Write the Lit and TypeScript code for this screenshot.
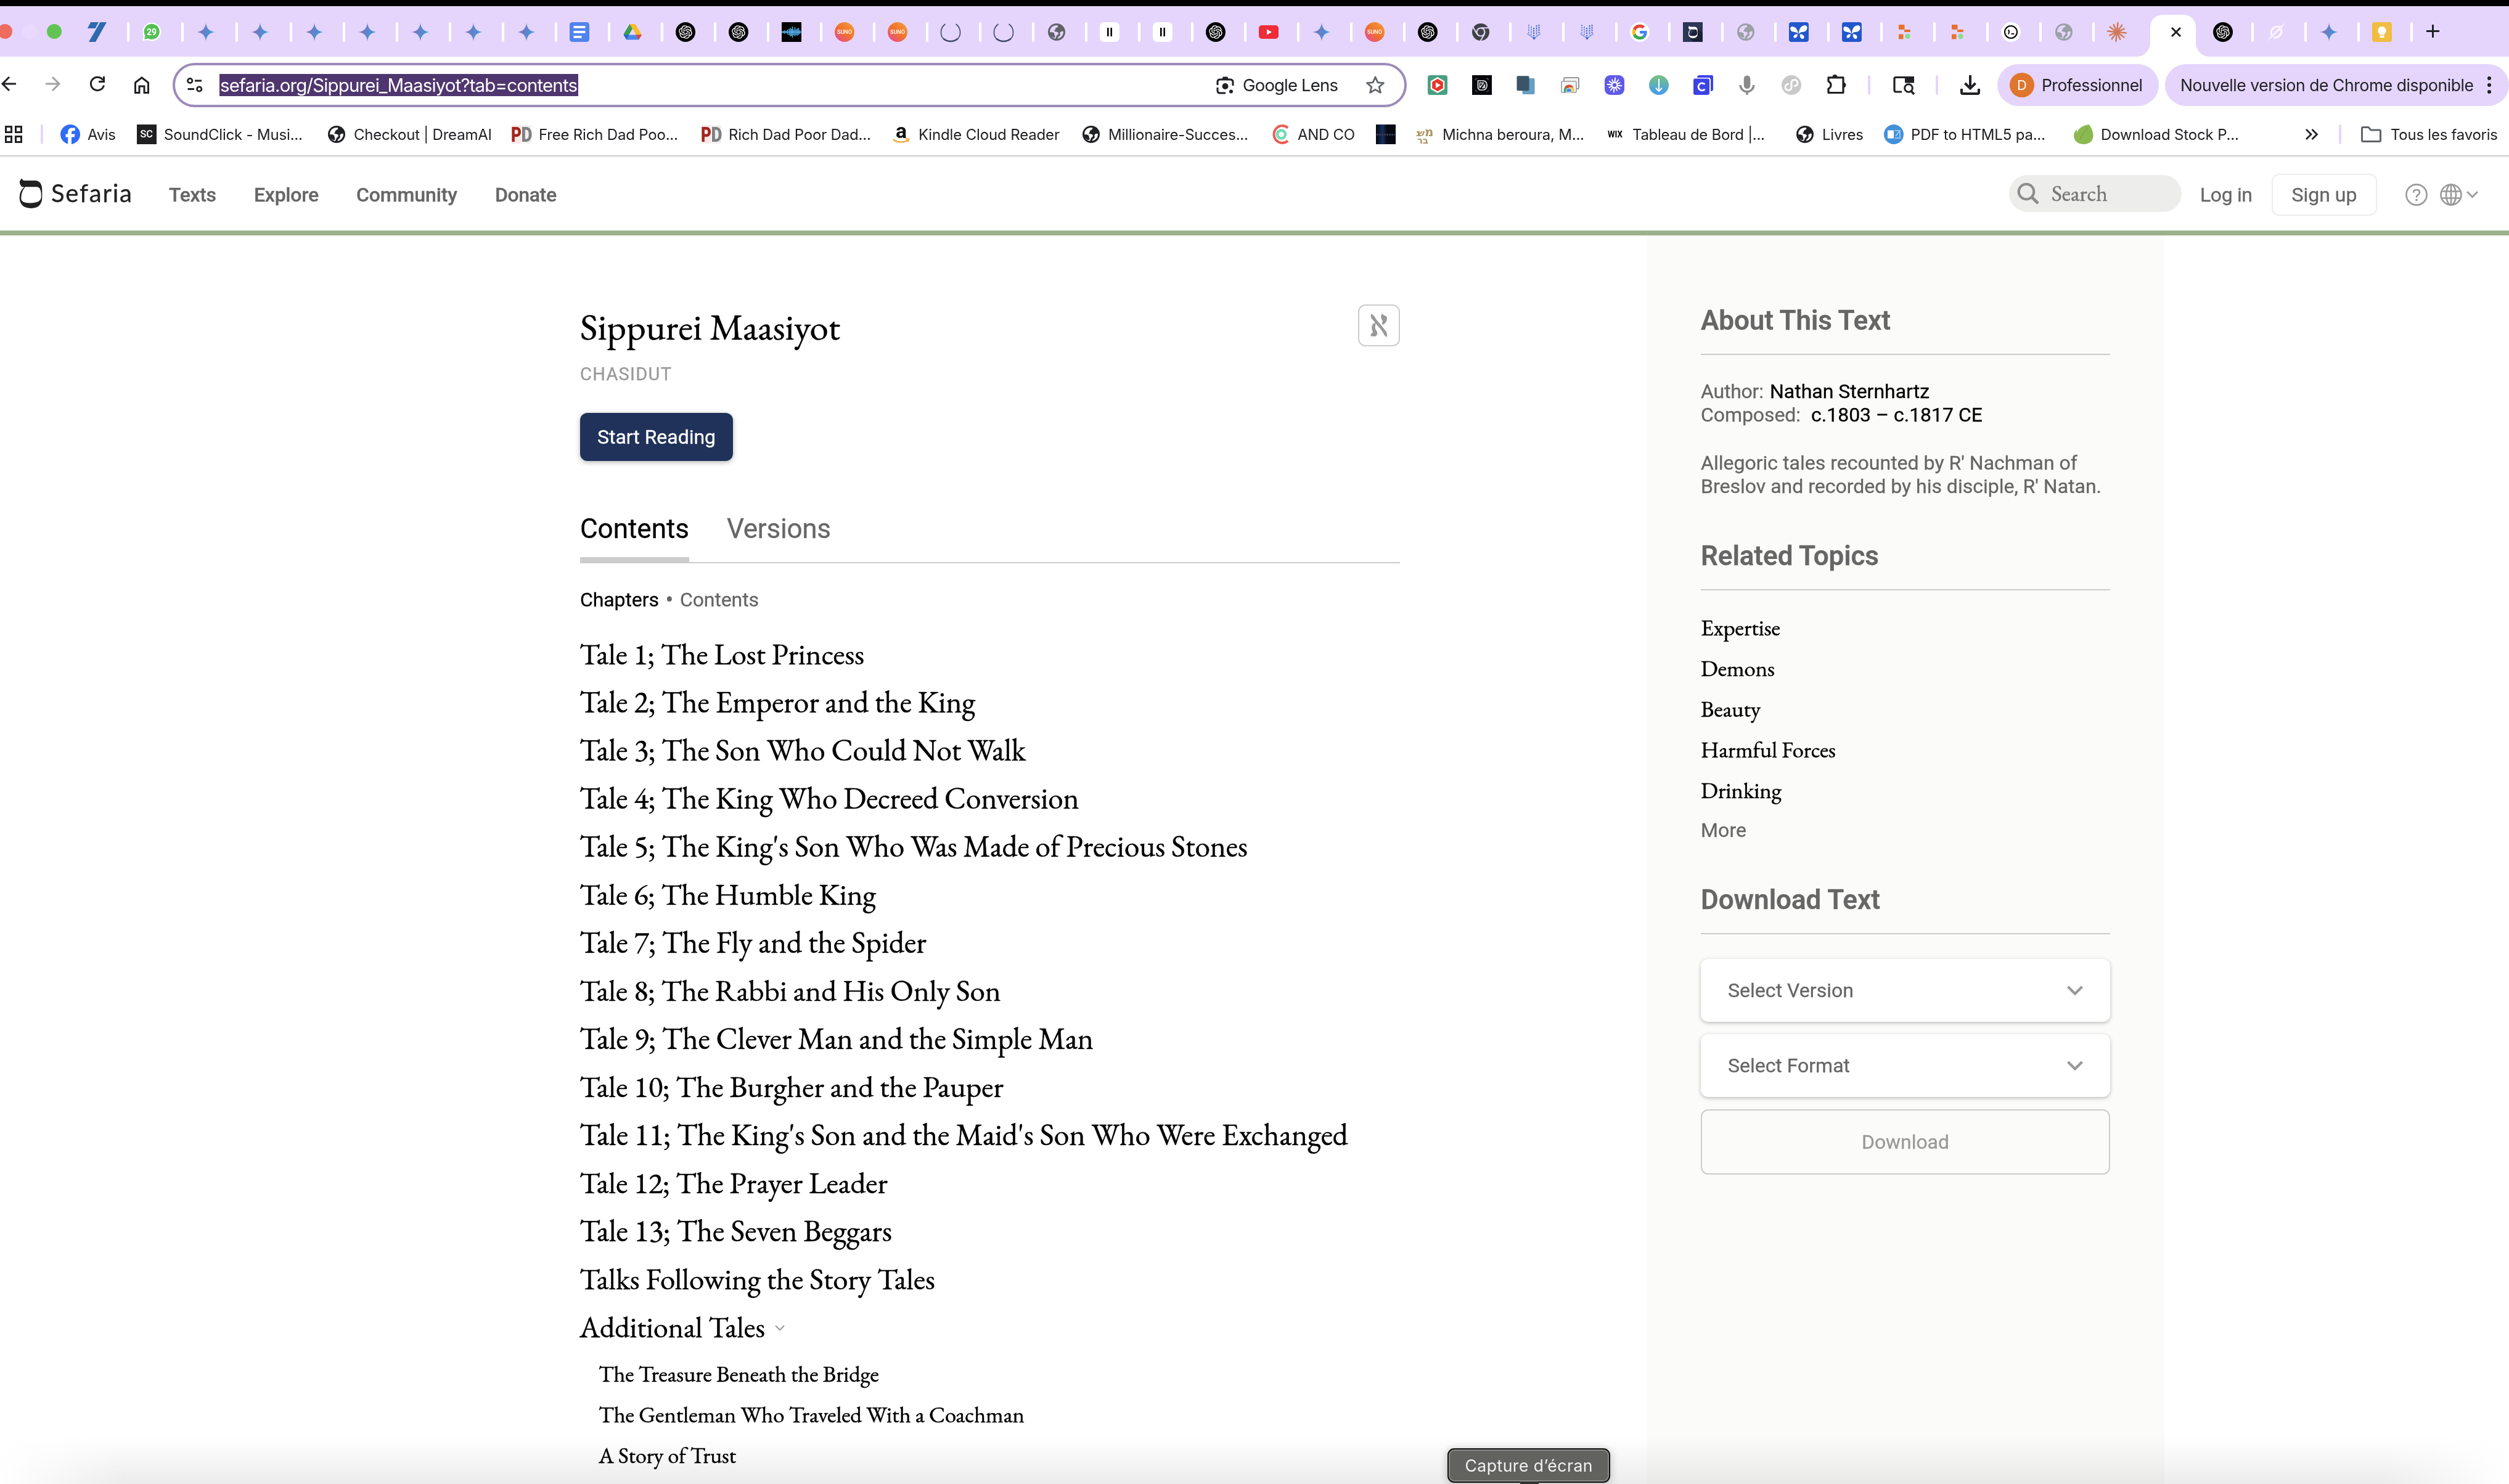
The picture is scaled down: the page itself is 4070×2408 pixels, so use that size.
import { LitElement, html, css, svg, nothing } from "lit";
import { customElement, property, state } from "lit/decorators.js";
import { styleMap } from "lit/directives/style-map.js";

/* One line of text that fills the given width, by tracking or by scaling its size. */
@customElement("fit-text")
class FitText extends LitElement {
  static styles = css`
    :host { display: inline-block; white-space: pre; flex: none; }
    .line { display: inline-block; }
  `;
  @property() text = "";
  @property({ type: Number }) w = 0;
  @property({ type: Boolean }) scaled = false;
  @state() private tracking = 0;
  @state() private size = 1;

  firstUpdated() {
    const line = this.renderRoot.querySelector(".line") as HTMLElement;
    const natural = line.getBoundingClientRect().width;
    const n = this.text.length - 1;
    if (natural <= 0 || n <= 0) return;
    if (this.scaled) this.size = this.w / natural;
    else this.tracking = (this.w - natural) / n;
  }

  render() {
    const look = this.scaled
      ? { fontSize: this.size + "em" }
      : { letterSpacing: this.tracking + "px", marginRight: -this.tracking + "px" };
    return html`<span class="line" style=${styleMap(look)}>${this.text}</span>`;
  }
}

const t = (text: string, w: number, cls = "") => html`<fit-text class=${cls} .text=${text} .w=${w}></fit-text>`;
const serif = (text: string, w: number) => html`<fit-text class="serif" .text=${text} .w=${w} .scaled=${true}></fit-text>`;
const pic = (body: unknown, size = 32, box = "0 0 32 32") =>
  html`<svg class="pic" width=${size} height=${size} viewBox=${box}>${body}</svg>`;

const star = svg`
  <defs><linearGradient id="gem" x1="0" y1="0.4" x2="1" y2="0.6"><stop offset="0" stop-color="#9168b0"/><stop offset=".5" stop-color="#5d86cc"/><stop offset="1" stop-color="#2fa2e6"/></linearGradient></defs>
  <path fill="url(#gem)" d="M16 1C16.8 9.5 21.500 15.200 31 16C21.500 16.800 16.800 22.500 16 31C15.200 22.500 10.500 16.800 1 16C10.500 15.200 15.200 9.500 16 1Z"/>`;

const knot = svg`<circle cx="16" cy="16" r="16" fill="#000"/><g transform="translate(5.200 5.200) scale(.9)"><path fill="#fff" d="M22.2819 9.8211a5.9847 5.9847 0 0 0-.5157-4.9108 6.0462 6.0462 0 0 0-6.5098-2.9A6.0651 6.0651 0 0 0 4.9807 4.1818a5.9847 5.9847 0 0 0-3.9977 2.9 6.0462 6.0462 0 0 0 .7427 7.0966 5.98 5.98 0 0 0 .511 4.9107 6.051 6.051 0 0 0 6.5146 2.9001A5.9847 5.9847 0 0 0 13.2599 24a6.0557 6.0557 0 0 0 5.7718-4.2058 5.9894 5.9894 0 0 0 3.9977-2.9001 6.0557 6.0557 0 0 0-.7475-7.0729zm-9.022 12.6081a4.4755 4.4755 0 0 1-2.8764-1.0408l.1419-.0804 4.7783-2.7582a.7948.7948 0 0 0 .3927-.6813v-6.7369l2.02 1.1686a.071.071 0 0 1 .038.052v5.5826a4.504 4.504 0 0 1-4.4945 4.4944zm-9.6607-4.1254a4.4708 4.4708 0 0 1-.5346-3.0137l.142.0852 4.783 2.7582a.7712.7712 0 0 0 .7806 0l5.8428-3.3685v2.3324a.0804.0804 0 0 1-.0332.0615L9.74 19.9502a4.4992 4.4992 0 0 1-6.1408-1.6464zM2.3408 7.8956a4.485 4.485 0 0 1 2.3655-1.9728V11.6a.7664.7664 0 0 0 .3879.6765l5.8144 3.3543-2.0201 1.1685a.0757.0757 0 0 1-.071 0l-4.8303-2.7865A4.504 4.504 0 0 1 2.3408 7.872zm16.5963 3.8558L13.1038 8.364 15.1192 7.2a.0757.0757 0 0 1 .071 0l4.8303 2.7913a4.4944 4.4944 0 0 1-.6765 8.1042v-5.6772a.79.79 0 0 0-.407-.667zm2.0107-3.0231l-.142-.0852-4.7735-2.7818a.7759.7759 0 0 0-.7854 0L9.409 9.2297V6.8974a.0662.0662 0 0 1 .0284-.0615l4.8303-2.7866a4.4992 4.4992 0 0 1 6.6802 4.66zM8.3065 12.863l-2.02-1.1638a.0804.0804 0 0 1-.038-.0567V6.0742a4.4992 4.4992 0 0 1 7.3757-3.4537l-.142.0805L8.704 5.459a.7948.7948 0 0 0-.3927.6813zm1.0976-2.3654l2.602-1.4998 2.6069 1.4998v2.9994l-2.5974 1.4997-2.6067-1.4997Z"/></g>`;

const globe = (fg: string, bg: string) => svg`
  <circle cx="16" cy="16" r="14" fill=${fg}/>
  <path fill=${bg} d="M5.200 15.500C5 9 10 4.800 17 5C19 5.300 18.500 7 17 8.500C15 9 14 9.500 14 11C14 12.500 12.500 13.500 12 14.500C13.500 15.500 17 15 18.500 17C20 19.500 17 20.500 16 22C15 24 15 26.500 13 26.700C8 25.500 5.200 21 5.200 17Z"/>
  <path fill=${fg} d="M5 16.500C9 15.500 13 17 12.500 19.500C12 21 14 22 13.500 24C13 26 10 25 8 23.500C5.500 21.500 4.500 19 5 16.500Z"/>
  <path fill=${bg} d="M26.800 15C25 14.500 22.500 15 21.500 17C21 19 22.500 19.500 21.500 21.500C20 23.500 18 24 17.500 26.700C23 26 27.500 21 26.800 15Z"/>`;

const suno = svg`
  <defs><linearGradient id="sun" x1="1" y1="0" x2="0.100" y2="1"><stop offset="0" stop-color="#f6a13a"/><stop offset=".55" stop-color="#f0702c"/><stop offset="1" stop-color="#e9479b"/></linearGradient></defs>
  <circle cx="16" cy="16" r="16" fill="url(#sun)"/>
  <text x="4" y="19" textLength="24" lengthAdjust="spacingAndGlyphs" class="tiny mid" font-size="8.500" fill="#fff">SUNO</text>`;

const wave = svg`<rect width="32" height="32" fill="#000"/><path stroke="#56b4ee" stroke-width="1.500" d="M0 16H32M2 14v4M4.500 13v6M7 14v4M9.500 12v8M12 11v10M14 9v14M16 11v11M17.500 7v18M19.500 12v9M21.500 8v15M23.500 12v9M25.500 10v12M27.500 9.500v11M29.500 13v6"/>`;
const ring = svg`<g fill="none" stroke="#3c4a66"><path stroke-width="1.600" d="M7.500 3C-1.500 9.500-1 21 4 26.500"/><path stroke-width="1.600" d="M24.500 3C33.500 9.500 33 21 28 26.500"/><path stroke-width="2.400" d="M4 26.500C11 32.500 21 32.500 28 26.500"/></g>`;
const bars = svg`<rect width="32" height="32" rx="7" fill="#fff"/><path fill="#000" d="M12 9h2.600v14H12zM17.400 9H20v14h-2.600z"/>`;
const youtube = svg`<rect y="5" width="32" height="22" rx="5" fill="#ee2d3a"/><path fill="#fff" d="M13 11.500v9l8-4.500z"/>`;
const chrome = svg`<circle cx="16" cy="16" r="14" fill="#3f4246"/><circle cx="16" cy="16" r="7.600" fill="#e5d5fc"/><circle cx="16" cy="16" r="5.400" fill="#3f4246"/><path fill="none" stroke="#e5d5fc" stroke-width="2" d="M16 9.200H29M10.100 19.400L3.500 8M21.900 19.400L15.500 30.500"/>`;
const chevronDots = svg`<g fill="none" stroke="#6d8fe0" stroke-width="2" stroke-dasharray="2.400 1.400"><path d="M8 4V18"/><path d="M12 7V21"/><path d="M16 9V25" stroke="#4169d0"/><path d="M20.500 5V21" stroke="#4169d0"/><path d="M24.500 4V18" stroke="#4169d0"/></g><path fill="none" stroke="#7d9be4" stroke-width="1.800" d="M5.500 18.500L16.500 26L27 18.500"/><circle cx="16.500" cy="26" r="2.100" fill="#4169d0"/>`;
const google = svg`<circle cx="16" cy="16" r="16" fill="#fff"/><g transform="translate(3.800 3.800) scale(.508)"><path fill="#EA4335" d="M24 9.500c3.540 0 6.710 1.220 9.210 3.600l6.850-6.850C35.900 2.380 30.470 0 24 0 14.620 0 6.510 5.380 2.560 13.220l7.980 6.190C12.430 13.720 17.740 9.500 24 9.500z"/><path fill="#4285F4" d="M46.980 24.550c0-1.570-.15-3.090-.38-4.550H24v9.020h12.940c-.58 2.960-2.260 5.480-4.780 7.180l7.730 6c4.510-4.180 7.090-10.360 7.090-17.650z"/><path fill="#FBBC05" d="M10.530 28.590c-.48-1.450-.76-2.990-.76-4.590s.27-3.140.76-4.590l-7.980-6.190C.92 16.460 0 20.120 0 24c0 3.880.92 7.540 2.560 10.780l7.970-6.190z"/><path fill="#34A853" d="M24 48c6.480 0 11.930-2.130 15.890-5.810l-7.730-6c-2.150 1.450-4.920 2.300-8.160 2.300-6.260 0-11.570-4.220-13.470-9.910l-7.980 6.190C6.510 42.620 14.620 48 24 48z"/></g>`;

const samekh = "M12 0L22 11H80Q114 12 114 60V95Q112 148 60 148Q4 148 2 95Q2 62 26 43L14 42Q2 32 3 14ZM30 42Q9 68 10 100Q12 122 55 122Q105 122 109 95Q112 44 88 42Z";
const sefaria = svg`<rect width="32" height="32" fill="#2d3655"/><path fill="#1a2036" d="M22 8L32 18V32H17L10 24z"/><g transform="translate(8.500 6) scale(.135)"><path fill="#fff" fill-rule="evenodd" d=${samekh}/></g>`;
const butterfly = svg`<rect width="32" height="32" rx="4" fill="#2257cc"/><g fill="#fff"><path d="M15.300 19.500C14.800 15.500 13 8 5.500 7C1.500 7 1.500 12 4 14.500C7 16.500 14 15.500 15.300 19.500Z"/><path d="M16.300 19.500C15.500 13 18.500 5.500 26 5C30.500 5.500 30.500 11 27.500 14C24 17 17.800 14.500 16.300 19.500Z"/><path d="M14 19.500C10 19 7.500 21 7.300 24C8.500 27.500 14 25.500 14 19.500Z"/><path d="M17.800 19.500C21 19 24.500 21 24.700 24.500C23.500 29.500 16.800 27 17.800 19.500Z"/></g>`;
const blocks = svg`<g fill="#e8702f"><rect x="6" y="4" width="9.500" height="8" rx="1"/><rect x="15" y="12" width="10" height="4" rx=".8"/><rect x="6" y="19.500" width="7.500" height="8" rx="1"/></g><circle cx="20.500" cy="23" r="4.200" fill="#8bdc8b"/>`;
const term = svg`<circle cx="16" cy="16" r="16" fill="#fff"/><circle cx="16" cy="16" r="10" fill="none" stroke="#000" stroke-width="2"/><path fill="none" stroke="#000" stroke-width="1.800" d="M11.500 12.500Q14.800 15.500 11.500 19.500M16.500 18.800H21.500"/>`;
const rays = (n: number, color: string, r0: number, r1: number, sw: number) =>
  Array.from({ length: n }, (_, i) => svg`<path stroke=${color} stroke-width=${sw} stroke-linecap="round" d="M16 ${16 - r0}V${16 - r1 + (i % 3)}" transform="rotate(${(360 / n) * i + 6} 16 16)"/>`);
const claude = svg`${rays(12, "#d07a58", 1, 15, 2.5)}`;
const ghost = svg`<g fill="none" stroke="#fbf8ff" stroke-width="3"><path d="M10 23A10 10 0 0 1 22 8"/><path d="M24 11A10 10 0 0 1 12 24.500"/></g><path fill="#fbf8ff" d="M1 31L10 20L25 5L31.500 1L22 13L10 24Z" opacity=".85"/>`;
const keep = svg`<rect width="32" height="32" rx="4" fill="#f1bd42"/><path fill="#fff" d="M16 7a6.800 6.800 0 0 1 3.800 12.300V20.500h-7.600V19.300A6.800 6.800 0 0 1 16 7zM12.500 21.800h7v3.400h-7z"/>`;
const docs = svg`<rect width="32" height="32" rx="4.500" fill="#4f83ee"/><path fill="#fff" d="M6.500 6h19v3.800h-19zM6.500 14h19v3.800h-19zM6.500 22h13v3.800h-13z"/>`;
const drive = svg`<path fill="#3a9c51" d="M11.500 3h9L11 19.500L6.300 27.500L1.500 19.500z"/><path fill="#f7bb2b" d="M11.500 3h9L31 20.500h-9.500z"/><path fill="#4a86ef" d="M6.300 28.500L11 20.500H31L26 28.500z"/><path fill="#2464d4" d="M1.500 20.500H11L6.300 28.500z"/><path fill="#dd4437" d="M21.500 20.500H31L26 28.500z"/><path fill="#e5d5fc" d="M16 10.800l5.400 9.400H10.600z"/>`;
const whatsapp = svg`<path fill="#fff" d="M1 30.500L3 22.500A15 15 0 1 1 9.500 29z"/><path fill="#54bf55" d="M4.200 27.800L5.500 22A12.600 12.600 0 1 1 10.200 26.400z"/><text x="8" y="20.800" textLength="16" lengthAdjust="spacingAndGlyphs" class="tiny" font-size="14" fill="#fff">29</text>`;
const seven = svg`<path fill="#2f69b0" d="M5 0H18L12.500 10H0ZM20.500 0H31L13 32H2Z"/>`;

const tabs: Array<[unknown, number]> = [
  [whatsapp, 88], [star, 88], [star, 88], [star, 86], [star, 86], [star, 86], [star, 86], [star, 86],
  [docs, 86], [drive, 86], [knot, 86], [knot, 86], [wave, 86], [suno, 86], [suno, 86], [ring, 86], [ring, 86],
  [globe("#5f6368", "#e5d5fc"), 86], [bars, 86], [bars, 86], [knot, 86], [youtube, 86], [star, 86], [suno, 86], [knot, 86],
  [chrome, 86], [chevronDots, 86], [chevronDots, 86], [google, 86], [sefaria, 86], [globe("#9aa0a6", "#e5d5fc"), 86],
  [butterfly, 86], [butterfly, 86], [blocks, 86], [blocks, 86], [term, 86], [globe("#9aa0a6", "#e5d5fc"), 86], [claude, 86],
];
const tailTabs: Array<[unknown, number]> = [[ghost, 86], [star, 86], [keep, 86]];

const dark = "#202124";
const extensions = [
  svg`<rect width="32" height="32" rx="4" fill="#4a9f80"/><path fill="#e93529" stroke="#fff" stroke-width="2.400" d="M16 4.500L26 10.200V21.800L16 27.500L6 21.800V10.200Z"/><path fill="#fff" d="M13 11.500v9.500l8-4.700z"/>`,
  svg`<rect width="32" height="32" fill="#06070b"/><g fill="none" stroke="#e8e8e8" stroke-width="1.700"><path d="M9.500 9H19Q24 10.500 24 16Q24 23 19 24H12L9.500 21Z"/><path d="M12.500 21V12.500H18.500L12.500 20.500M17 20.500H20.500V15.500Z" stroke-width="1.400"/></g><g fill="none" stroke="#666" stroke-width="1.200"><path d="M5 8Q6 5.500 9 5M23 5Q26 6 27 8M5 24Q6 26.500 9 27M23 27Q26 26.500 27 24"/></g>`,
  svg`<rect x="10.500" y="5" width="20" height="26" rx="2" fill="#679fc4"/><rect x="1.500" y="1.200" width="20" height="24" rx="2" fill="#3a5567"/>`,
  svg`<g fill="#f4f4f4" stroke="#777" stroke-width="1.500"><rect x="6" y="4" width="24" height="18" rx="1.500"/><rect x="2" y="10" width="24" height="18" rx="1.500" stroke="#999"/></g><path fill="#cf4a3c" d="M7 20A8 8 0 0 1 21.500 20L14 23z"/><path fill="#3ba255" d="M6 27.500V22L8.500 18.500L13 27.500z"/><path fill="#f7c83e" d="M22.500 27.500V22L19 19.500H14L16 27.500z"/><path fill="#4d86ee" stroke="#fff" d="M10 27.500a4.500 4.500 0 1 1 8 0z"/>`,
  svg`<rect width="32" height="32" rx="9" fill="#5f5ae8"/>${rays(12, "#fff", 5, 11.500, 1.900)}<circle cx="16" cy="16" r="4.300" fill="none" stroke="#fff" stroke-width="2"/>`,
  svg`<defs><linearGradient id="dn" x1="0" y1="0" x2="0" y2="1"><stop offset="0" stop-color="#7cc17f"/><stop offset="1" stop-color="#3f9bf6"/></linearGradient></defs><circle cx="16" cy="16" r="16" fill="url(#dn)"/><path fill="none" stroke="#fff" stroke-width="2" stroke-linecap="round" d="M16 6.500V26M11.500 21.200L16 26L20.500 21.200"/>`,
  svg`<path fill="#3c43e6" d="M10 0H30Q32 0 32 2V23Q32 26 28 26V8Q28 4 24 4H6Q6 0 10 0Z"/><rect y="5.500" width="26" height="26.500" rx="3" fill="#3c43e6"/><path fill="none" stroke="#fff" stroke-width="2.800" d="M18.500 14.800A6 6 0 1 0 18.500 22.800"/>`,
  svg`<rect x="10.800" y="0.500" width="10.500" height="21.500" rx="5.200" fill="#8a8a8a"/><path fill="none" stroke="#8a8a8a" stroke-width="3.400" d="M5.200 16A10.800 10.800 0 0 0 26.800 16M16 27V32"/>`,
  svg`<circle cx="16" cy="16" r="16" fill="#c9c9c9"/><path fill="none" stroke="#fff" stroke-width="3" stroke-linecap="round" d="M10.500 14.500A5 5 0 1 0 16 19.500V12.500A5 5 0 1 1 21.500 17.500"/>`,
  svg`<path fill="none" stroke=${dark} stroke-width="3.200" stroke-linejoin="round" d="M4 3.800H28V28.500H4V22Q8 20 8 16T4 10Z"/><path fill=${dark} d="M10.500 3a4 4 0 0 1 8 0zM28 11.500a4.500 4.500 0 0 1 0 9z"/>`,
];

const bm = {
  fb: svg`<circle cx="16" cy="16" r="16" fill="#2f6bf6"/><path fill="#fff" d="M12.200 32V20.500H8.500V15.500H12.200V13C12.200 8 14.500 5.500 19 5.500H23.800V10.200H21C18.800 10.200 18 11 18 12.800V15.500H23.500L22.700 20.500H18V32z"/>`,
  sc: svg`<rect width="32" height="32" fill="#202022"/><text x="5.500" y="20.800" textLength="20.500" lengthAdjust="spacingAndGlyphs" class="tiny mid" font-size="16" fill="#fff">SC</text>`,
  globe: globe(dark, "#fff"),
  pd: svg`<rect y="1" width="15" height="30" fill="#f9e8e6"/><rect x="16" y="1" width="16" height="30" fill="#f0f0f0"/><text x="-1" y="27.500" textLength="17" lengthAdjust="spacingAndGlyphs" class="tiny heavy" font-size="33" fill="#a3241c">P</text><text x="15.500" y="27.500" textLength="18" lengthAdjust="spacingAndGlyphs" class="tiny heavy" font-size="33" fill="#808080">D</text>`,
  amazon: svg`<text x="7" y="22" textLength="18" lengthAdjust="spacingAndGlyphs" class="tiny" font-size="34" fill="#111">a</text><path fill="none" stroke="#f0a030" stroke-width="2.200" d="M3 24.500Q14 32 26 26M23 23.500L28 23.500L27 28"/>`,
  andco: svg`<path fill="none" stroke="#ee5b52" stroke-width="4" d="M28 5.500A13.500 14 0 1 0 28 26.500"/><circle cx="17.500" cy="16" r="6.500" fill="none" stroke="#6fdcb4" stroke-width="4.500"/>`,
  night: svg`<defs><linearGradient id="nt" x1="0" x2="1" y1="0" y2="0"><stop offset="0" stop-color="#04060f"/><stop offset=".35" stop-color="#16305e"/><stop offset=".55" stop-color="#0a0a18"/><stop offset="1" stop-color="#04060f"/></linearGradient></defs><rect width="32" height="32" fill="url(#nt)"/><path stroke="#34384e" stroke-width="3" stroke-dasharray="3 1" d="M1 16.500H31"/>`,
  michna: svg`<g fill="#ab9660" class="he"><text x="15" y="19" font-size="20" textLength="15">מ</text><text x="1" y="19" font-size="15" textLength="14">שנ</text><text x="3" y="31" font-size="15" textLength="18">בר</text></g>`,
  wix: svg`<text x="4" y="21" textLength="24" lengthAdjust="spacingAndGlyphs" class="tiny" font-size="14" fill="#000">WIX</text>`,
  pdf: svg`<circle cx="16" cy="16" r="16" fill="#4290da"/><rect x="6" y="9.500" width="10" height="13" fill="#fff"/><path fill="none" stroke="#b4d6f5" stroke-width="1.500" d="M17.500 10H26V22H17.500M19 19L25 11"/>`,
  envato: svg`<path fill="#8ab950" d="M24.500 0C28 4 32 12 31.500 19C31 27 25 32 16 32C7 32 1 27 0 19C0 15 1.500 11.500 4 9C5.500 8 5 11 5.500 14C6 7 14 1.500 24.500 0Z"/><path stroke="#79a845" fill="none" stroke-width="1.500" d="M23 6Q14 14 10 24"/>`,
};
/* icon, label, label width, distance to the next bookmark */
const bookmarks: Array<[unknown, string, number, number]> = [
  [bm.fb, "Avis", 46, 124], [bm.sc, "SoundClick - Musi...", 225, 308], [bm.globe, "Checkout | DreamAI", 224, 300],
  [bm.pd, "Free Rich Dad Poo...", 226, 308], [bm.pd, "Rich Dad Poor Dad...", 231, 308], [bm.amazon, "Kindle Cloud Reader", 229, 308],
  [bm.globe, "Millionaire-Succes...", 227, 307], [bm.andco, "AND CO", 93, 171], [bm.night, "", 0, 64],
  [bm.michna, "Michna beroura, M...", 230, 308], [bm.wix, "Tableau de Bord |...", 215, 308], [bm.globe, "Livres", 67, 144],
  [bm.pdf, "PDF to HTML5 pa...", 218, 308], [bm.envato, "Download Stock P...", 224, 376],
];

const tales: Array<[string, number]> = [
  ["Tale 1; The Lost Princess", 462], ["Tale 2; The Emperor and the King", 642], ["Tale 3; The Son Who Could Not Walk", 724],
  ["Tale 4; The King Who Decreed Conversion", 811], ["Tale 5; The King's Son Who Was Made of Precious Stones", 1084],
  ["Tale 6; The Humble King", 481], ["Tale 7; The Fly and the Spider", 563], ["Tale 8; The Rabbi and His Only Son", 684],
  ["Tale 9; The Clever Man and the Simple Man", 834], ["Tale 10; The Burgher and the Pauper", 688],
  ["Tale 11; The King's Son and the Maid's Son Who Were Exchanged", 1247], ["Tale 12; The Prayer Leader", 500],
  ["Tale 13; The Seven Beggars", 507], ["Talks Following the Story Tales", 577], ["Additional Tales", 301],
];
const subTales: Array<[string, number]> = [
  ["The Treasure Beneath the Bridge", 455], ["The Gentleman Who Traveled With a Coachman", 691], ["A Story of Trust", 223],
];
const topics: Array<[string, number]> = [["Expertise", 129], ["Demons", 120], ["Beauty", 97], ["Harmful Forces", 219], ["Drinking", 131]];

@customElement("app-root")
class AppRoot extends LitElement {
  static styles = css`
    :host { display: block; position: relative; width: 4070px; height: 2408px; overflow: hidden; background: #fff; font-family: Roboto, "Liberation Sans", sans-serif; font-size: 32px; color: #666; }
    * { box-sizing: border-box; }
    svg { display: block; flex: none; overflow: visible; }
    .tiny { font-family: Roboto, "Liberation Sans", sans-serif; font-weight: 700; }
    .mid { font-weight: 500; }
    .heavy { font-weight: 900; }
    .he { font-family: "DejaVu Sans", sans-serif; font-weight: 700; }
    .screen-edge { height: 10px; background: #000; }

    .tabstrip { display: flex; align-items: flex-start; height: 82px; padding-top: 26px; background: #e5d5fc; }
    .lights { margin: -1px 42px 0 0; }
    .first { margin-right: 32px; }
    .tab { display: flex; gap: 20px; flex: none; }
    .tick { width: 4px; height: 32px; border-radius: 2px; background: #fff; flex: none; }
    .active { position: relative; display: flex; justify-content: center; width: 74px; height: 68px; margin: -12px 28px 0 8px; padding: 20px 0 0 10px; border-radius: 20px 20px 0 0; background: #fff; flex: none; }
    .active::before, .active::after { content: ""; position: absolute; bottom: 0; width: 22px; height: 22px; }
    .active::before { right: 100%; background: radial-gradient(circle at 0 0, transparent 21.500px, #fff 22px); }
    .active::after { left: 100%; background: radial-gradient(circle at 100% 0, transparent 21.500px, #fff 22px); }
    .lone { margin-right: 30px; }
    .plus { margin: 4px 0 0 22px; }

    .ui { font-family: Inter, "Liberation Sans", sans-serif; color: #202124; }
    .toolbar { display: flex; align-items: center; height: 92px; }
    .navs { display: flex; margin-left: -22px; }
    .nav { display: flex; justify-content: center; width: 72px; }
    .omnibox { display: flex; align-items: center; width: 2002px; height: 72px; margin: 0 14px; padding: 0 31px 0 19px; border: 4px solid #9d8bb9; border-radius: 36px; font-size: 27.500px; line-height: 36px; flex: none; }
    .url { margin-left: 27px; padding: 0 1px; height: 36px; background: #50366e; color: #fff; font-size: 29.500px; }
    .space { flex: 1; }
    .lens { margin-right: 14px; }
    .fav { margin-left: 44px; }
    .rule { width: 4px; height: 32px; border-radius: 2px; background: #e5d5fc; flex: none; }
    .r1 { margin: 0 37px 0 16px; }
    .side { margin-right: 35px; }
    .dl { margin: 0 28px 0 36px; }
    .pill { display: flex; align-items: center; height: 68px; border-radius: 34px; background: #e5d5fc; font-size: 26.500px; flex: none; }
    .profile { width: 262px; padding-left: 20px; margin-right: 10px; }
    .avatar { display: flex; align-items: center; justify-content: center; width: 40px; height: 40px; margin-right: 12px; border-radius: 50%; background: #e0752d; color: #fff; font-size: 22px; }
    .update { width: 558px; padding: 0 28px 0 25px; justify-content: space-between; }

    .bookmarks { display: flex; align-items: center; height: 70px; border-bottom: 2px solid #ccc; padding-left: 8px; font-size: 24px; }
    .r2 { margin: 0 28px 0 30px; }
    .bookmark { display: flex; align-items: center; gap: 12px; flex: none; }
    .r3 { margin: 0 32px 0 34px; }
    .folder { margin-right: 15px; }

    .site { display: flex; align-items: center; height: 128px; padding: 4px 50px 0 31px; border-bottom: 8px solid #9bb18b; -webkit-text-stroke: .3px; }
    .logo { margin: -5px 14px 0 0; }
    .word { font-family: Lato, "Open Sans", sans-serif; font-size: 40px; color: #212121; margin: -7px 60px 0 0; }
    .menu { display: flex; gap: 61px; font-weight: 500; }
    .search { display: flex; align-items: center; width: 280px; height: 60px; margin: -4px 30px 0 0; padding-left: 13px; border-radius: 30px; background: #ededec; font-size: 37px; flex: none; }
    .search .serif { margin: -3px 0 0 20px; color: #777; }
    .signup { display: flex; align-items: center; justify-content: center; width: 171px; height: 68px; margin: 0 46px 0 31px; border: 2px solid #ededec; border-radius: 12px; flex: none; }
    .help { margin-right: 20px; }
    .lang { margin-right: 7px; }
    .serif { font-family: "EB Garamond", "Liberation Serif", serif; color: #000; -webkit-text-stroke: .5px; }

    .page { display: flex; align-items: stretch; height: 2026px; padding-left: 941px; -webkit-text-stroke: .3px; }
    .book { width: 1330px; margin-right: 400px; padding-top: 107px; flex: none; }
    .top { display: flex; justify-content: space-between; height: 80px; font-size: 62px; line-height: 80px; }
    .aleph { display: flex; align-items: center; justify-content: center; width: 68px; height: 68px; margin-top: 5px; border: 2px solid #ccc; border-radius: 12px; }
    .category { margin-top: 18px; height: 40px; line-height: 40px; font-size: 29px; color: #999; }
    .start { display: flex; align-items: center; justify-content: center; width: 248px; height: 78px; margin-top: 43px; border-radius: 12px; background: #203259; color: #fff; box-shadow: 0 2px 8px rgba(0, 0, 0, .3); }
    .views { display: flex; gap: 61px; height: 86px; margin-top: 80px; border-bottom: 2px solid #ccc; font-size: 44px; line-height: 60px; }
    .view { height: 86px; }
    .current { color: #000; border-bottom: 10px solid #ccc; }
    .crumbs { display: flex; height: 40px; line-height: 40px; margin-top: 39px; }
    .black { color: #000; }
    .dot { width: 34px; text-align: center; font-size: 38px; }
    .tales { display: flex; flex-direction: column; margin: 29px 0 0 -1px; font-size: 50px; }
    .tale { display: flex; align-items: center; height: 78px; line-height: 78px; }
    .more-tales { margin: 4px 0 0 16px; }
    .subtales { display: flex; flex-direction: column; margin-top: 4px; padding-left: 30px; font-size: 37.500px; line-height: 66px; }
    .subtale { height: 66px; }

    .info { width: 840px; padding: 112px 88px 0; background: #fbfbfa; flex: none; }
    .heading { height: 82px; border-bottom: 2px solid #ccc; font-size: 44px; font-weight: 600; line-height: 52px; }
    .later { margin-top: 68px; }
    .para { display: flex; flex-direction: column; margin-top: 40px; line-height: 38px; }
    .fact { display: flex; height: 38px; }
    .author { margin-left: 10px; }
    .composed { margin-left: 17px; }
    .topics { display: flex; flex-direction: column; margin-top: 27px; font-size: 37px; line-height: 66px; }
    .topic { height: 66px; }
    .more { height: 38px; margin-top: 13px; line-height: 38px; }
    .form { display: flex; flex-direction: column; gap: 20px; margin-top: 40px; }
    .select { display: flex; align-items: center; justify-content: space-between; height: 102px; padding: 0 44px; border-radius: 12px; background: #fff; box-shadow: 0 2px 6px rgba(0, 0, 0, .25); }
    .download { display: flex; align-items: center; justify-content: center; height: 106px; border: 2px solid #ccc; border-radius: 12px; color: #999; }

    .shade { position: absolute; left: 0; right: 0; bottom: 0; height: 76px; background: linear-gradient(90deg, #fff, rgba(255, 255, 255, 0) 5%, rgba(255, 255, 255, 0) 95%, #fff), linear-gradient(rgba(0, 0, 0, 0), rgba(0, 0, 0, .075)); mix-blend-mode: multiply; }
    .tip { position: absolute; left: 2348px; top: 2350px; display: flex; align-items: center; justify-content: center; width: 264px; height: 56px; border: 2px solid #111; border-radius: 11px; background: #62625f; box-shadow: inset 0 0 0 2px #8b8b88, 0 2px 14px rgba(0, 0, 0, .25); color: #f2f2f2; font-family: Inter, sans-serif; font-size: 26.500px; }
    .tip::after { content: ""; position: absolute; top: 100%; left: 116px; width: 30px; height: 10px; background: #333; }
    .cross { margin-top: 0; }
  `;

  tab([icon, w]: [unknown, number]) {
    return html`<div class="tab" style=${styleMap({ width: w + "px" })}><span class="tick"></span>${pic(icon)}</div>`;
  }

  render() {
    const chevron = html`<svg width="26" height="16" viewBox="0 0 26 16"><path fill="none" stroke="#999" stroke-width="4.200" d="M1.500 2L13 13.500L24.500 2"/></svg>`;
    return html`
      <div class="screen-edge"></div>
      <div class="tabstrip">
        <svg class="lights" width="100" height="32" viewBox="0 0 100 32"><circle cx="8" cy="16" r="12" fill="#ee6b5f"/><circle cx="48" cy="16" r="12" fill="#ead9fe"/><circle cx="88" cy="16" r="12" fill="#61c454"/></svg>
        <div class="first">${pic(seven)}</div>
        ${tabs.map((x) => this.tab(x))}
        <div class="active"><svg class="cross" width="16" height="16" viewBox="0 0 16 16"><path stroke=${dark} stroke-width="3" d="M1 1L15 15M15 1L1 15"/></svg></div>
        <div class="lone">${pic(knot)}</div>
        ${tailTabs.map((x) => this.tab(x))}
        <span class="tick"></span>
        <svg class="plus" width="21" height="21" viewBox="0 0 21 21"><path stroke=${dark} stroke-width="3" d="M10.500 0V21M0 10.500H21"/></svg>
      </div>

      <div class="toolbar ui">
        <div class="navs">
          <div class="nav"><svg width="24" height="24" viewBox="0 0 24 24"><path fill="none" stroke=${dark} stroke-width="3" d="M24 12H2.500M13 1L2 12L13 23"/></svg></div>
          <div class="nav"><svg width="24" height="24" viewBox="0 0 24 24"><path fill="none" stroke="#a3a3a3" stroke-width="3" d="M0 12H21.500M11 1L22 12L11 23"/></svg></div>
          <div class="nav"><svg width="24" height="24" viewBox="0 0 24 24"><path fill="none" stroke=${dark} stroke-width="3" d="M21 6A10.700 10.700 0 1 0 22.500 14.500M22.500 0V8.500H14"/></svg></div>
          <div class="nav"><svg width="24" height="28" viewBox="0 0 24 28"><path fill="none" stroke=${dark} stroke-width="3" d="M1.500 10L12 2L22.500 10V26.500H16V16H8V26.500H1.500Z"/></svg></div>
        </div>
        <div class="omnibox">
          <svg width="26" height="24" viewBox="0 0 26 24"><g fill="none" stroke=${dark} stroke-width="2.800"><circle cx="5.200" cy="5" r="3.700"/><path d="M13 5H24M1.500 18.500H12"/><circle cx="20.200" cy="18.500" r="3.700"/></g></svg>
          <div class="url">${t("sefaria.org/Sippurei_Maasiyot?tab=contents", 580)}</div>
          <span class="space"></span>
          <svg class="lens" width="29" height="29" viewBox="0 0 29 29"><g fill="none" stroke=${dark} stroke-width="3"><path d="M2 14V9Q2 5 6 5H22Q27 5 27 9V15M2 18V23Q2 27 6 27H15"/></g><path fill=${dark} d="M9 5L11 0.500H18L20 5z"/><circle cx="14.500" cy="16" r="5" fill=${dark}/><circle cx="24" cy="24.500" r="3" fill=${dark}/></svg>
          ${t("Google Lens", 155)}
          <svg class="fav" width="32" height="32" viewBox="0 0 32 32"><path fill="none" stroke="#5f6368" stroke-width="2.800" stroke-linejoin="round" d="M16 3L19.900 11.800L29.500 12.700L22.200 19L24.400 28.400L16 23.400L7.600 28.400L9.800 19L2.500 12.700L12.100 11.800Z"/></svg>
        </div>
        ${extensions.map((e) => html`<div class="nav">${pic(e)}</div>`)}
        <span class="rule r1"></span>
        <svg class="side" width="34" height="30" viewBox="0 0 34 30"><path fill="none" stroke=${dark} stroke-width="3.200" d="M14 26H4.500Q2 26 2 23V5Q2 2.500 4.500 2.500H30Q32.500 2.500 32.500 5V8"/><path fill=${dark} d="M19 1H34V11.500H19z"/><circle cx="25" cy="20" r="6.300" fill="#fff" stroke=${dark} stroke-width="3"/><path stroke=${dark} stroke-width="3.400" d="M29 24.500L34 30"/></svg>
        <span class="rule"></span>
        <svg class="dl" width="32" height="32" viewBox="0 0 32 32"><path fill="none" stroke=${dark} stroke-width="4" d="M16 0V21M7.500 13L16 21.500L24.500 13M2 22V28Q2 30 4 30H28Q30 30 30 28V22"/></svg>
        <div class="pill profile"><span class="avatar">D</span>${t("Professionnel", 164)}</div>
        <div class="pill update">${t("Nouvelle version de Chrome disponible", 476)}<svg width="8" height="28" viewBox="0 0 8 28"><g fill=${dark}><circle cx="4" cy="3" r="3"/><circle cx="4" cy="14" r="3"/><circle cx="4" cy="25" r="3"/></g></svg></div>
      </div>

      <div class="bookmarks ui">
        <svg width="28" height="28" viewBox="0 0 28 28"><g fill="none" stroke=${dark} stroke-width="3"><rect x="1.500" y="1.500" width="9" height="9"/><rect x="17.500" y="1.500" width="9" height="9"/><rect x="1.500" y="17.500" width="9" height="9"/><rect x="17.500" y="17.500" width="9" height="9"/></g></svg>
        <span class="rule r2"></span>
        ${bookmarks.map(([icon, label, w, span]) => html`<div class="bookmark" style=${styleMap({ width: span + "px" })}>${pic(icon)}${label ? t(label, w) : nothing}</div>`)}
        <svg width="20" height="18" viewBox="0 0 20 18"><path fill="none" stroke=${dark} stroke-width="2.800" d="M1 1L9 9L1 17M10.500 1L18.500 9L10.500 17"/></svg>
        <span class="rule r3"></span>
        <svg class="folder" width="33" height="26" viewBox="0 0 33 26"><path fill="none" stroke="#5f6368" stroke-width="3" stroke-linejoin="round" d="M1.500 3Q1.500 1.500 3 1.500H12L16 6H30Q31.500 6 31.500 8V22.500Q31.500 24.500 30 24.500H3Q1.500 24.500 1.500 22.500Z"/></svg>
        ${t("Tous les favoris", 174)}
      </div>

      <div class="site">
        <svg class="logo" width="38" height="50" viewBox="0 0 116 150"><path fill="#212121" fill-rule="evenodd" d=${samekh}/></svg>
        ${t("Sefaria", 131, "word")}
        <div class="menu">${t("Texts", 77)}${t("Explore", 105)}${t("Community", 164)}${t("Donate", 100)}</div>
        <span class="space"></span>
        <div class="search"><svg width="36" height="36" viewBox="0 0 36 36"><circle cx="15" cy="15" r="12.300" fill="none" stroke="#8c8c8c" stroke-width="4"/><path stroke="#8c8c8c" stroke-width="5" d="M24 24L34 34"/></svg>${serif("Search", 91)}</div>
        ${t("Log in", 85)}
        <div class="signup">${t("Sign up", 106)}</div>
        <svg class="help" width="36" height="36" viewBox="0 0 36 36"><circle cx="18" cy="18" r="16.600" fill="none" stroke="#999" stroke-width="2.600"/><path fill="none" stroke="#999" stroke-width="2.600" d="M13 14.500Q13 10 18 10T23 14Q23 16.500 20.500 18Q18 19.500 18 22.500"/><circle cx="18" cy="26.500" r="1.800" fill="#999"/></svg>
        <svg class="lang" width="36" height="36" viewBox="0 0 36 36"><g fill="none" stroke="#999" stroke-width="2.600"><circle cx="18" cy="18" r="16.500"/><ellipse cx="18" cy="18" rx="8" ry="16.500"/><path d="M18 1.500V34.500M3.500 12.500H32.500M3.500 23.500H32.500"/></g></svg>
        <svg width="19" height="12" viewBox="0 0 19 12"><path fill="none" stroke="#999" stroke-width="2.800" d="M1 1L9.500 9.500L18 1"/></svg>
      </div>

      <div class="page">
        <main class="book">
          <div class="top">
            ${serif("Sippurei Maasiyot", 422)}
            <div class="aleph"><svg width="30" height="36" viewBox="0 0 30 36"><path fill="#999" stroke="#999" stroke-width="1.600" stroke-linejoin="round" d="M3 0L6 3Q10 10 16 16L24 26Q28 30 27 36L24 33Q21 26 14 19L6 9Q1 5 3 0ZM20 0L23 2.500Q28 3 27 8Q27 12 22 16L20.500 15Q23 11 20 8Q18 4 20 0ZM6 16L9 15Q6 22 10 27Q13 31 9.500 35H2.500Q1.500 33 4.500 31Q7 29 4.500 25Q3 20 6 16Z"/></svg></div>
          </div>
          <div class="category">${t("CHASIDUT", 148)}</div>
          <div class="start">${t("Start Reading", 192)}</div>
          <div class="views"><div class="view current">${t("Contents", 177)}</div><div class="view">${t("Versions", 169)}</div></div>
          <div class="crumbs">${t("Chapters", 128, "black")}<span class="dot">•</span>${t("Contents", 128)}</div>
          <div class="tales">
            ${tales.map(([s, w], i) => html`<div class="tale">${serif(s, w)}${i === tales.length - 1 ? html`<svg class="more-tales" width="16" height="10" viewBox="0 0 16 10"><path fill="none" stroke="#999" stroke-width="2" d="M1 1L8 8L15 1"/></svg>` : nothing}</div>`)}
          </div>
          <div class="subtales">${subTales.map(([s, w]) => html`<div class="subtale">${serif(s, w)}</div>`)}</div>
        </main>
        <aside class="info">
          <div class="heading">${t("About This Text", 308)}</div>
          <div class="para">
            <div class="fact">${t("Author:", 102)}${t("Nathan Sternhartz", 259, "author black")}</div>
            <div class="fact">${t("Composed:", 162)}${t("c.1803 – c.1817 CE", 278, "composed black")}</div>
          </div>
          <div class="para">
            <div class="fact">${t("Allegoric tales recounted by R' Nachman of", 611)}</div>
            <div class="fact">${t("Breslov and recorded by his disciple, R' Natan.", 650)}</div>
          </div>
          <div class="heading later">${t("Related Topics", 289)}</div>
          <div class="topics">${topics.map(([s, w]) => html`<div class="topic">${serif(s, w)}</div>`)}</div>
          <div class="more">${t("More", 74)}</div>
          <div class="heading later">${t("Download Text", 291)}</div>
          <div class="form">
            <div class="select">${t("Select Version", 204)}${chevron}</div>
            <div class="select">${t("Select Format", 198)}${chevron}</div>
            <div class="download">${t("Download", 142)}</div>
          </div>
        </aside>
      </div>
      <div class="shade"></div>
      <div class="tip">${t("Capture d’écran", 207)}</div>
    `;
  }
}
